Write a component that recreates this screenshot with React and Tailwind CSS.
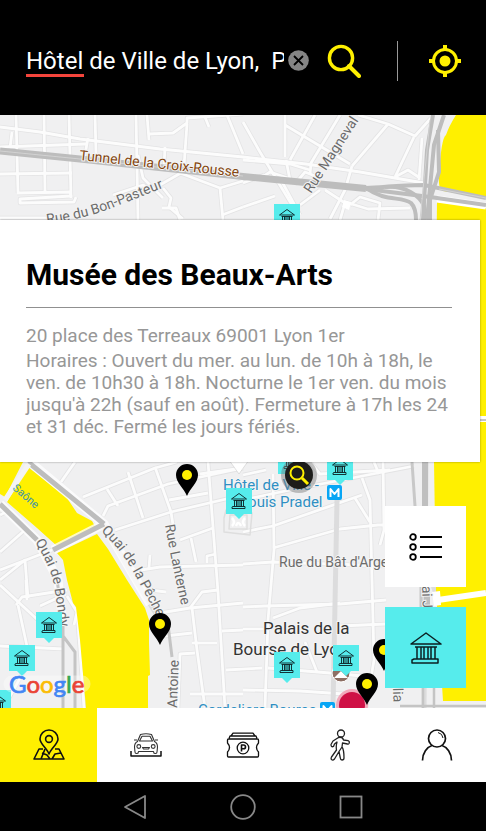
const minorRoads = [
  'M0 127 L40 132 L80 139 L160 149 L243 157 L306 164 L360 172 L424 183',
  'M16 115 L18 193', 'M44 115 L45 192', 'M69 115 L71 198', 'M95 115 L96 153', 'M136 115 L138 220',
  'M147 115 L149 140', 'M88 138 L84 160', 'M12 132 L10 148', 'M0 147 L86 144', 'M0 174 L72 173', 'M0 218 L50 218',
  'M17 193 L70 192 L71 196 L20 199 L20 203 L74 202 L76 197', 'M149 134 L173 133 L187 123 L187 118 L243 114',
  'M187 124 L184 166', 'M227 115 L243 154', 'M205 117 L209 127', 'M113 195 L143 185 L150 190',
  'M165 147 L164 166', 'M138 155 L143 178 L163 198', 'M160 185 L186 170', 'M180 173 L220 188 L243 181',
  'M220 188 L223 220', 'M222 215 L243 207', 'M163 188 L171 198 L169 207 L183 219', 'M162 208 L176 208 L180 220',
  'M243 122 L260 152 L298 215', 'M285 115 L285 157', 'M315 115 L290 160', 'M340 115 L311 163 L310 175',
  'M285 125 L350 164', 'M358 115 L388 124 L415 136 L431 118', 'M388 124 L352 166', 'M414 137 L395 177', 'M422 138 L419 180',
  'M395 177 L408 170 L420 178', 'M243 160 L290 164 L310 170', 'M243 183 L264 175', 'M243 207 L275 196',
  'M264 176 L270 172 L288 178', 'M286 160 L290 180', 'M352 166 L345 190 L330 219', 'M295 184 L305 172 L320 178',
  'M325 190 L345 203 L340 220', 'M350 205 L360 197 L380 203 L378 220', 'M345 202 L368 209 L410 208',
  'M300 205 L320 190', 'M280 178 L300 215',
  'M75 462 L61 482', 'M83 497 L155 468 L177 462', 'M103 516 L108 506 L168 484 L243 468', 'M107 489 L118 506',
  'M128 472 L143 518', 'M155 467 L171 512 L173 525', 'M115 530 L171 512 L243 495', 'M169 500 L208 493',
  'M208 462 L218 592 L225 708', 'M200 474 L243 468', 'M180 540 L213 528', 'M191 538 L196 562', 'M141 570 L160 567 L243 565',
  'M150 555 L149 568', 'M207 563 L207 556 L216 554', 'M0 570 L52 550', 'M0 552 L25 530', 'M0 515 L10 510', 'M0 580 L25 560 L28 598',
  'M16 605 L22 597 L67 590', 'M0 585 L40 622', 'M18 605 L30 660 L8 700', 'M0 646 L64 649', 'M26 580 L27 600', 'M40 606 L66 594',
  'M67 596 L77 612 L80 650 L84 708', 'M77 612 L74 625', 'M150 590 L166 592', 'M160 613 L190 608 L243 603',
  'M190 608 L202 592 L218 590', 'M192 608 L197 650 L205 708', 'M165 636 L192 633', 'M192 643 L217 643',
  'M222 631 L243 630', 'M195 653 L180 654 L178 708', 'M190 694 L243 694', 'M226 670 L262 668',
  'M243 532 L273 526 L362 495', 'M273 474 L274 550 L268 620 L265 708', 'M243 500 L290 490 L414 466',
  'M273 548 L340 529 L378 525 L386 525', 'M355 498 L370 522', 'M362 478 L370 500 L372 580 L374 660 L366 708',
  'M243 564 L273 562 L386 566', 'M243 607 L265 606 L340 604 L386 600', 'M273 618 L300 608 L340 603', 'M340 626 L386 624',
  'M243 629 L268 629', 'M305 642 L317 672', 'M268 668 L330 673 L362 676', 'M374 462 L379 474',
  'M310 462 L320 474 L390 470', 'M383 462 L384 530 L380 545', 'M243 690 L300 691 L344 694', 'M243 475 L266 470',
];

const softRoads = ['M337 500 L333 708', 'M426 462 L424 708', 'M428 570 L438 600', 'M102 522 L134 578 L160 620'];
const greyRoads = [
  'M366 188 C382 188 395 185 424 185 L486 198', 'M366 189 L430 197 L486 205',
  'M366 188 C385 202 402 196 411 203 C416 208 416 215 416 220', 'M385 187 C405 185 420 196 424 206 L424 220',
  'M433 115 L427 150 L423 220', 'M444 115 L434 145 L427 220', 'M438 130 L439 172 L430 200 L430 220',
];

const museums = [
  { x: 274, y: 204 }, { x: 278, y: 448 }, { x: 327, y: 454 }, { x: 226, y: 488 }, { x: 36, y: 612 },
  { x: 9, y: 645 }, { x: -15, y: 690 }, { x: 274, y: 652 }, { x: 333, y: 645 },
];
const pins = [{ x: 187, y: 496 }, { x: 160, y: 645 }, { x: 384, y: 671 }, { x: 367, y: 705 }];

function MuseumShape() {
  return (
    <g fill="none" stroke="#0b1f22" strokeLinejoin="round">
      <path d="M1 12 L16 1 L31 12 Z M4 27 H28 V31 H2 V28 Z M5 15 H27" />
      <path d="M7 15 V27 M11 15 V27 M14 15 V27 M18 15 V27 M21 15 V27 M25 15 V27" />
    </g>
  );
}

function CityMap() {
  return (
    <svg className="absolute inset-0 h-full w-full" viewBox="0 115 486 593" preserveAspectRatio="xMidYMid slice" role="img" aria-label="Plan de Lyon">
      <rect x="0" y="115" width="486" height="593" fill="#f0f0f1" />
      <g fill="none" strokeLinejoin="round">
        {minorRoads.map((d) => <path key={d} d={d} stroke="#e3e3e4" strokeWidth="4.4" />)}
        {minorRoads.map((d) => <path key={d} d={d} stroke="#fcfcfc" strokeWidth="2.8" />)}
        {softRoads.map((d) => <path key={d} d={d} stroke="#dcdcdd" strokeWidth="5" />)}
        <path d="M224 518 L226 510 L252 513 L250 535 L224 532 Z M230 515 H247 V529 H229 Z" stroke="#dedede" strokeWidth="1.5" />
        <path d="M232 518 Q236 522 232 526 M245 518 Q241 522 245 526 M236 526 Q238 520 241 526" stroke="#fff" strokeWidth="2.5" />
      </g>
      <path d="M344 200 L351 202 L349 210 L342 207 Z" fill="#fff" />
      <g fill="#fff000">
        <path d="M486 115 H456 Q449 126 446 135 Q441 138 439 177 Q438 189 443 191 L486 197 Z" />
        <path d="M437 202 L486 208 V701 H443 L436 590 L434 462 Z" />
        <path d="M0 462 H23 L5 497 L0 494 Z M28 467 L67 498 L77 513 L92 521 L96 528 L57 546 L37 528 L7 502 Z" />
        <path d="M97 534 L108 549 L127 580 L145 608 L149 620 L149 643 L150 675 L148 676 V708 H86 L80 640 L76 607 L73 603 L67 580 L63 560 L57 553 Z" />
      </g>
      <g fill="none">
        <path d="M437 199 L486 206" stroke="#fff" strokeWidth="7" />
        <path d="M420 419 H486 M438 600 L486 593" stroke="#fff" strokeWidth="6" />
        <path d="M432 592 L440 591 L441 605 L434 606 Z" fill="#fff" />
        <path d="M0 151 L80 159 L243 176.500 L366 188.500" stroke="#bdbdbd" strokeWidth="7" />
        <g stroke="#bdbdbd" strokeWidth="4" strokeLinejoin="round">
          {greyRoads.map((d) => <path key={d} d={d} />)}
        </g>
        <path d="M436 420 H486" stroke="#c6c6c6" strokeWidth="2" />
        <path d="M439 189 L486 198 M0 151 L80 159 L243 176 M430 120 L420 220" stroke="#d2d2d2" strokeWidth="1" />
        <path d="M30 462 L104 524 L150 604 M104 524 L53 550 M0 504 L37 540 L58 580 L63 625" stroke="#fff" strokeWidth="9" opacity=".75" />
        <path d="M28 462 L104 524 M104 524 L53 550 M0 504 L37 540" stroke="#bdbdbd" strokeWidth="5" />
        <path d="M168 625 L172 657 M63 620 V708 M63 636 L75 652 V708 M57 580 L60 600" stroke="#c4c4c4" strokeWidth="3" />
        <path d="M412 462 L415 506 M421 585 V610" stroke="#c8c8c8" strokeWidth="3" />
        <path d="M425 462 V506 M427 585 V610" stroke="#bfbfbf" strokeWidth="6" />
        <path d="M423 688 V708 M434 688 V708 M400 706 H486" stroke="#c4c4c4" strokeWidth="2.5" />
        <path d="M29 464 L5 500" stroke="#f4f4f4" strokeWidth="5" />
      </g>

      <defs>
        <path id="bondy" d="M35 542 Q50 566 54 585 L61 632" />
        <path id="pecherie" d="M101 531 Q123 552 135 575 L160 622" />
        <path id="lanterne" d="M165 525 Q172 565 181 604" />
        <path id="pasteur" d="M47 224 Q84 219 112 208 T170 185" />
      </defs>
      <g fontFamily="Roboto, 'Liberation Sans', sans-serif" fontSize="14" fill="#6c6c6c" stroke="#f4f4f4" strokeWidth="2" paintOrder="stroke">
        <text transform="translate(79 160) rotate(6)" fill="#84460f">Tunnel de la Croix-Rousse</text>
        <text><textPath href="#pasteur">Rue du Bon-Pasteur</textPath></text>
        <text transform="translate(311 194) rotate(-57)">Rue Magneval</text>
        <text><textPath href="#bondy">Quai de Bondy</textPath></text>
        <text><textPath href="#pecherie">Quai de la Pêcherie</textPath></text>
        <text><textPath href="#lanterne">Rue Lanterne</textPath></text>
        <text transform="translate(177 708) rotate(-88)">Antoine</text>
        <text x="279" y="567">Rue du Bât d'Argent</text>
        <text transform="translate(422 586) rotate(88)">ai Jean</text>
        <text transform="translate(393 688) rotate(88)">lia</text>
        <text transform="translate(12 489) rotate(41)" fontSize="11" fill="#3f93a8" stroke="none">Saône</text>
        <g fill="#2f8fc3" fontSize="15">
          <text x="223" y="490">Hôtel de Ville -</text>
          <text x="240" y="507">Louis Pradel</text>
          <text x="198" y="715">Cordeliers Bourse</text>
        </g>
        <g fill="#333" fontSize="17">
          <text x="263" y="634">Palais de la</text>
          <text x="233" y="655">Bourse de Lyon</text>
        </g>
      </g>

      {[[327, 485], [320, 702]].map(([x, y]) => (
        <g key={y}>
          <rect x={x} y={y} width="15" height="15" rx="2" fill="#08a6f5" />
          <path d={`M${x + 3.5} ${y + 12} V${y + 4} L${x + 7.5} ${y + 9} L${x + 11.5} ${y + 4} V${y + 12}`} fill="none" stroke="#fff" strokeWidth="2" strokeLinejoin="round" />
        </g>
      ))}
      <circle cx="341" cy="673" r="9" fill="#8d6e63" stroke="#fff" strokeWidth="1" />
      <path d="M334 678 L341 671 L348 678 Z" fill="#fff" />
      <circle cx="352" cy="705" r="16" fill="#f2a9bb" />
      <circle cx="352" cy="705" r="13" fill="#cf1045" />
      {museums.map(({ x, y }) => (
        <g key={`${x}-${y}`} transform={`translate(${x} ${y})`}>
          <path d="M0 0 H26 V26 H18 L13 31 L8 26 H0 Z" fill="#56ecec" />
          <g transform="translate(5 5) scale(.5)" strokeWidth="1.8"><MuseumShape /></g>
        </g>
      ))}
      {pins.map(({ x, y }) => (
        <g key={`${x}-${y}`} transform={`translate(${x} ${y})`}>
          <path d="M0 0 C-3 -8 -11 -13 -11 -21 A11 11 0 0 1 11 -21 C11 -13 3 -8 0 0 Z" fill="#000" />
          <circle cy="-21" r="5" fill="#fff000" />
        </g>
      ))}
      <circle cx="299" cy="475" r="18" fill="#777" opacity=".45" />
      <circle cx="299" cy="475" r="14" fill="#1d1d1b" />
      <path d="M302 478 L308 484" stroke="#fff000" strokeWidth="3" />
      <circle cx="297" cy="473" r="6.5" fill="none" stroke="#fff000" strokeWidth="2" />
      <path d="M229 460 H249 L239 474 Z" fill="#fff" stroke="#ccc" strokeWidth=".6" />
      <path d="M12 684 H82" stroke="#fff" strokeWidth="17" strokeLinecap="round" opacity=".35" />
      <text x="9" y="693" fontFamily="Lato, sans-serif" fontSize="24" strokeWidth=".7">
        <tspan fill="#4285f4" stroke="#4285f4">G</tspan><tspan fill="#ea4335" stroke="#ea4335">o</tspan><tspan fill="#fbbc05" stroke="#fbbc05">o</tspan><tspan fill="#4285f4" stroke="#4285f4">g</tspan><tspan fill="#34a853" stroke="#34a853">l</tspan><tspan fill="#ea4335" stroke="#ea4335">e</tspan>
      </text>
    </svg>
  );
}

function SearchHeader() {
  return (
    <header className="flex h-[115px] shrink-0 items-center bg-black pt-1.5 pl-[26px] text-white">
      <div className="relative min-w-0 flex-1">
        <input aria-label="Adresse" spellCheck={false} defaultValue="Hôtel de Ville de Lyon,  Place de la Comédie" className="block h-10 w-full bg-transparent text-2xl outline-none" />
        <span className="absolute bottom-1 left-0 h-[3px] w-[58px] bg-[#f4453c]" />
      </div>
      <button aria-label="Effacer" className="mr-[18px] ml-1">
        <svg width="21" height="21" viewBox="0 0 21 21"><circle cx="10.5" cy="10.5" r="10.3" fill="#858585" /><path d="M6 6 L15 15 M15 6 L6 15" stroke="#000" strokeWidth="1.8" /></svg>
      </button>
      <button aria-label="Rechercher">
        <svg width="34" height="34" viewBox="0 0 34 34" fill="none" stroke="#fff000" strokeWidth="3.4"><circle cx="14" cy="14" r="11.6" /><path d="M22 22 L32 32" strokeWidth="4" strokeLinecap="round" /></svg>
      </button>
      <span className="mr-[30px] ml-9 h-10 w-px bg-[#999]" />
      <button aria-label="Ma position" className="mr-6">
        <svg width="34" height="34" viewBox="0 0 34 34" fill="none" stroke="#fff000"><circle cx="17" cy="17" r="11.5" strokeWidth="3" /><circle cx="17" cy="17" r="5.5" fill="#fff000" stroke="none" /><path d="M17 1 V6 M17 28 V33 M1 17 H6 M28 17 H33" strokeWidth="4" /></svg>
      </button>
    </header>
  );
}

function TabMap() {
  return <svg width="32" height="32" viewBox="0 0 32 32" fill="none" stroke="#111" strokeWidth="1.6" strokeLinejoin="round"><path d="M16 25 C14 19 7 15 7 10 A9 9 0 0 1 25 10 C25 15 18 19 16 25 Z" /><circle cx="16" cy="10" r="3.4" /><path d="M10 20 H6 L1 30 H31 L26 20 H22 M12 20 L8 30 M9 24 L14 26 L17 30 M19 30 L22 25 L28 24" /></svg>;
}
function TabCar() {
  return (
    <svg width="32" height="26" viewBox="0 0 32 26" fill="none" stroke="#333" strokeWidth="1.1" strokeLinejoin="round">
      <path d="M1 19 V24 H31 V19" stroke="#111" strokeWidth="1.5" />
      <path d="M7.500 9.500 L10.500 2.500 Q16 1 21.500 2.500 L24.500 9.500 Q27.500 11 27.500 15 L27 20 Q27 21.500 25.500 21.500 H25 Q23.500 21.500 23.500 19.500 H8.500 Q8.500 21.500 7 21.500 H6.500 Q5 21.500 5 20 L4.500 15 Q4.500 11 7.500 9.500 Z" />
      <path d="M9.500 9 L12 4.200 H20 L22.500 9 Z M4 8 H7 M25 8 H28 M12.500 15.500 H19.500 L18.500 17 H13.500 Z" />
      <circle cx="8.800" cy="14.500" r="1.900" /><circle cx="23.200" cy="14.500" r="1.900" />
    </svg>
  );
}
function TabTicket() {
  return <svg width="34" height="26" viewBox="0 0 34 26" fill="none" stroke="#111" strokeWidth="1.3" strokeLinejoin="round"><path d="M2.500 7 H31.500 Q32.500 7 32.500 8 V11 Q28.500 15.500 32.500 20 V24 Q32.500 25 31.500 25 H2.500 Q1.500 25 1.500 24 V20 Q5.500 15.500 1.500 11 V8 Q1.500 7 2.500 7 Z M3 6.500 L4 4 H30 L31 6.500 M5 4 L7 1.200 H27 L29 4" /><circle cx="17" cy="16" r="5.800" /><path d="M15.500 19.500 V13 H17.500 Q19.500 13 19.500 15 Q19.500 16.800 17.500 16.800 H15.500" strokeWidth="1.600" /></svg>;
}
function TabWalk() {
  return <svg width="20" height="32" viewBox="0 0 20 32" fill="none" stroke="#222" strokeWidth="1.300" strokeLinejoin="round"><circle cx="11" cy="4.500" r="3.500" /><path d="M8.500 8.500 Q12.500 7.500 13.500 11 L18 11.700 Q20 12.500 19 14.500 Q18.500 15.300 17.500 15 L12.500 14 L12 18 Q14 20.500 14 29 Q14 31 12 31 Q10.500 31 10.300 29 L9 22.500 L4.500 30 Q3 31.800 1.500 30.500 Q0.700 29.500 1.500 28 L6.500 21 Q5.800 17 7 13 L4.500 15 L3.500 17.500 Q1 18.500 1 15.500 L3 12 Z M12 18 L9 22.500" /></svg>;
}
function TabUser() {
  return <svg width="32" height="32" viewBox="0 0 32 32" fill="none" stroke="#111" strokeWidth="1.700"><circle cx="16" cy="9.500" r="8.500" /><path d="M1.500 31.500 C1.500 24 6 18 11 16.500 M21 16.500 C26 18 30.500 24 30.500 31.500" /><path d="M17 3.500 Q21.500 4.500 22 9" strokeWidth="1" /></svg>;
}

const tabs = [
  { name: 'Carte', Icon: TabMap, style: 'bg-[#fff000]' },
  { name: 'Parkings', Icon: TabCar, style: 'bg-white' },
  { name: 'Tickets', Icon: TabTicket, style: 'bg-white' },
  { name: 'À pied', Icon: TabWalk, style: 'bg-white' },
  { name: 'Profil', Icon: TabUser, style: 'bg-white' },
];

export default function App() {
  return (
    <div className="flex h-screen flex-col overflow-hidden bg-black font-['Roboto','Liberation_Sans',sans-serif]">
      <SearchHeader />
      <main className="relative min-h-0 flex-1 overflow-hidden pt-[105px]">
        <CityMap />
        <article className="relative mr-1.5 bg-white pt-9 pr-7 pb-6 pl-[26px] shadow-[0_0_2px_rgba(0,0,0,0.4)]">
          <h1 className="border-b border-[#909090] pb-[13px] text-3xl leading-[38px] font-bold text-black">Musée des Beaux-Arts</h1>
          <p className="mt-4 text-[19px] leading-6 text-[#979797]">20 place des Terreaux 69001 Lyon 1er</p>
          <p className="mt-0.5 text-[19px] leading-[22px] text-[#979797]">Horaires : Ouvert du mer. au lun. de 10h à 18h, le ven. de 10h30 à 18h. Nocturne le 1er ven. du mois jusqu'à 22h (sauf en août). Fermeture à 17h les 24 et 31 déc. Fermé les jours fériés.</p>
        </article>
        <div className="absolute right-5 bottom-5 flex flex-col gap-5">
          <button aria-label="Liste" className="flex size-[81px] items-center justify-center bg-white">
            <svg width="34" height="28" viewBox="0 0 34 28" fill="none" stroke="#000" strokeWidth="1.8"><circle cx="4" cy="4" r="2.800" /><circle cx="4" cy="14" r="2.800" /><circle cx="4" cy="24" r="2.800" /><path d="M11 4 H33 M11 14 H33 M11 24 H33" /></svg>
          </button>
          <button aria-label="Musées" className="flex size-[81px] items-center justify-center bg-[#56ecec]">
            <svg width="32" height="32" viewBox="0 0 32 32" strokeWidth="1.500"><MuseumShape /></svg>
          </button>
        </div>
      </main>
      <nav aria-label="Navigation" className="grid h-[74px] shrink-0 grid-cols-5 bg-white">
        {tabs.map(({ name, Icon, style }) => (
          <button key={name} aria-label={name} className={`flex items-center justify-center ${style}`}><Icon /></button>
        ))}
      </nav>
      <div className="flex h-[49px] shrink-0 items-center justify-center gap-[83px] bg-black">
        <button aria-label="Retour"><svg width="24" height="26" viewBox="0 0 24 26" fill="none" stroke="#888" strokeWidth="1.800" strokeLinejoin="round"><path d="M22 2 V24 L2 13 Z" /></svg></button>
        <button aria-label="Accueil"><svg width="26" height="26" viewBox="0 0 26 26" fill="none" stroke="#888" strokeWidth="1.800"><circle cx="13" cy="13" r="11.800" /></svg></button>
        <button aria-label="Applications"><svg width="24" height="24" viewBox="0 0 24 24" fill="none" stroke="#888" strokeWidth="1.800"><rect x="1.500" y="1.500" width="21" height="21" /></svg></button>
      </div>
    </div>
  );
}
